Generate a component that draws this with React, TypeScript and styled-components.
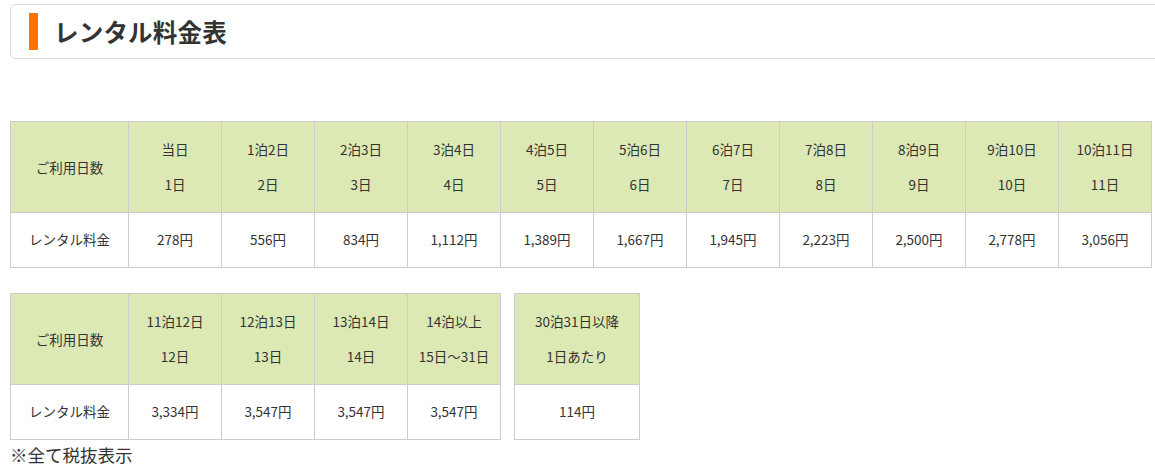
import { FC } from "react";
import styled, { createGlobalStyle } from "styled-components";

const GlobalStyle = createGlobalStyle`
  body {
    margin: 0;
    background: #fff;
    color: #333;
    font-family: "Noto Sans CJK JP", "Noto Sans", sans-serif;
  }
`;

// 日数の見出しと料金
interface PriceCol {
  stay: string;
  days: string;
  price: string;
}

const firstRow: PriceCol[] = [
  { stay: "当日", days: "1日", price: "278円" },
  { stay: "1泊2日", days: "2日", price: "556円" },
  { stay: "2泊3日", days: "3日", price: "834円" },
  { stay: "3泊4日", days: "4日", price: "1,112円" },
  { stay: "4泊5日", days: "5日", price: "1,389円" },
  { stay: "5泊6日", days: "6日", price: "1,667円" },
  { stay: "6泊7日", days: "7日", price: "1,945円" },
  { stay: "7泊8日", days: "8日", price: "2,223円" },
  { stay: "8泊9日", days: "9日", price: "2,500円" },
  { stay: "9泊10日", days: "10日", price: "2,778円" },
  { stay: "10泊11日", days: "11日", price: "3,056円" },
];

const secondRow: PriceCol[] = [
  { stay: "11泊12日", days: "12日", price: "3,334円" },
  { stay: "12泊13日", days: "13日", price: "3,547円" },
  { stay: "13泊14日", days: "14日", price: "3,547円" },
  { stay: "14泊以上", days: "15日～31日", price: "3,547円" },
];

const longStay: PriceCol[] = [
  { stay: "30泊31日以降", days: "1日あたり", price: "114円" },
];

const Page = styled.div`
  padding: 4px 0 0 10px;
`;

const TitleBox = styled.div`
  display: flex;
  align-items: center;
  gap: 16px;
  height: 53px;
  padding-left: 18px;
  margin-right: -10px;
  border: 1px solid #ddd;
  border-radius: 5px;
`;

const TitleBar = styled.span`
  width: 9px;
  height: 37px;
  background: #ff7200;
`;

const Title = styled.h2`
  margin: 0;
  font-size: 24.5px;
  font-weight: 700;
  color: #333;
  letter-spacing: 0.2px;
`;

const Tables = styled.div<{ $top: number }>`
  display: flex;
  align-items: flex-start;
  gap: 13px;
  margin-top: ${(p) => p.$top}px;
`;

const PriceTable = styled.table`
  border-collapse: collapse;
  table-layout: fixed;
  font-size: 13.5px;
`;

const Cell = styled.td<{ $head?: boolean; $w: number }>`
  width: ${(p) => p.$w}px;
  box-sizing: border-box;
  padding: ${(p) => (p.$head ? "10px 0" : "9px 0 10px")};
  border: 1px solid #ccc;
  background: ${(p) => (p.$head ? "#dde9b5" : "#fff")};
  text-align: center;
  line-height: 35px;
  white-space: nowrap;
`;

const Note = styled.p`
  margin: 3px 0 0;
  font-size: 17.5px;
  line-height: 24px;
`;

const Table: FC<{ cols: PriceCol[]; label?: boolean; w?: number }> = ({
  cols,
  label = true,
  w = 93,
}) => (
  <PriceTable>
    <tbody>
      <tr>
        {label && (
          <Cell $head $w={118}>
            ご利用日数
          </Cell>
        )}
        {cols.map((c) => (
          <Cell $head $w={w} key={c.stay}>
            {c.stay}
            <br />
            {c.days}
          </Cell>
        ))}
      </tr>
      <tr>
        {label && <Cell $w={118}>レンタル料金</Cell>}
        {cols.map((c) => (
          <Cell $w={w} key={c.stay}>
            {c.price}
          </Cell>
        ))}
      </tr>
    </tbody>
  </PriceTable>
);

const App: FC = () => (
  <Page>
    <GlobalStyle />
    <TitleBox>
      <TitleBar />
      <Title>レンタル料金表</Title>
    </TitleBox>
    <Tables $top={62}>
      <Table cols={firstRow} />
    </Tables>
    <Tables $top={25}>
      <Table cols={secondRow} />
      <Table cols={longStay} label={false} w={125} />
    </Tables>
    <Note>※全て税抜表示</Note>
  </Page>
);

export default App;
